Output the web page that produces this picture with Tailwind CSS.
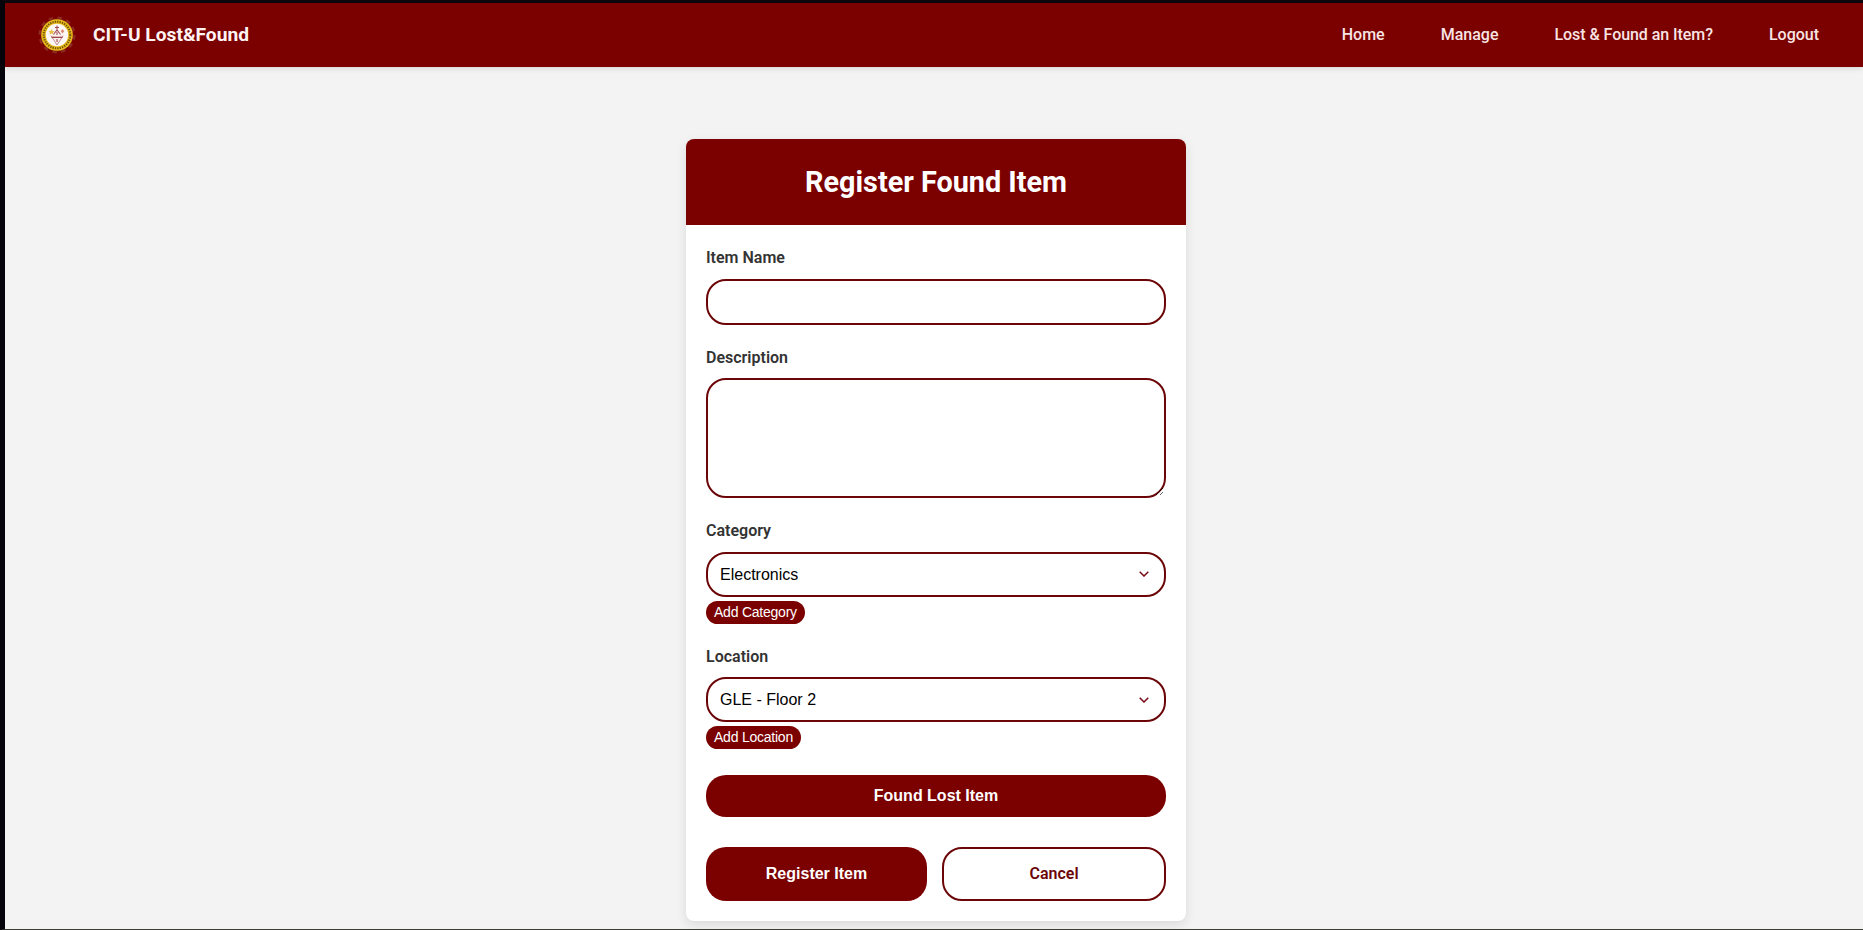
<!DOCTYPE html>
<html lang="en">
<head>
<meta charset="utf-8">
<title>CIT-U Lost&amp;Found</title>
<script src="https://cdn.jsdelivr.net/npm/@tailwindcss/browser@4"></script>
</head>
<body class="h-screen overflow-hidden border-t-[3px] border-b border-l-[5px] border-t-[#0a060b] border-l-[#05040a] border-b-[#3c3c38] bg-[#f3f3f3] font-['Roboto',sans-serif] text-base text-[#333]">
<header class="flex h-16 items-center justify-between bg-[#7b0000] pr-11 pl-[33px] shadow-[0_2px_5px_rgba(0,0,0,0.1)]">
  <div class="flex items-center gap-[17px]">
    <svg class="size-[38px]" viewBox="0 0 38 38">
      <circle cx="19" cy="19" r="17" fill="none" stroke="#8c2c20" stroke-width="3" stroke-dasharray="4.45 4.45"/>
      <circle cx="19" cy="19" r="16.4" fill="#861c12"/>
      <circle cx="19" cy="19" r="15.8" fill="#e6b81c"/>
      <circle cx="19" cy="19" r="13.3" fill="none" stroke="#6b530c" stroke-width="2" stroke-dasharray="1.3 1.1"/>
      <circle cx="19" cy="19" r="11.2" fill="#fdf8f5"/>
      <path d="M12.8 19.5L19 29l6.2-9.5" fill="#fbeeec" stroke="#b9878a" stroke-width=".9"/>
      <path d="M13.5 21.3h11" stroke="#97323b" stroke-width="1.2"/>
      <path d="M19 9.5v4M17 11.5h4M15.5 18.5L19 14l3.5 4.5M19 16v3M19 23v3" fill="none" stroke="#a04c55" stroke-width="1.1"/>
      <path d="M13.5 13l1 2 2 .2-1.5 1.4.4 2-1.9-1-1.9 1 .4-2-1.5-1.4 2-.2z" fill="#e9bd42"/>
      <path d="M24.5 13l1.8 2.2-1.8 2.2-1.8-2.2z" fill="#db8b73"/>
    </svg>
    <span class="text-[19.2px] font-bold text-[#fff3f3]">CIT-U Lost&amp;Found</span>
  </div>
  <nav class="flex gap-14 font-medium text-[#f8e4e4]">
    <a>Home</a><a>Manage</a><a class="tracking-[-0.06px]">Lost &amp; Found an Item?</a><a>Logout</a>
  </nav>
</header>
<main class="ml-[681px] mt-[72px] h-[782px] w-[500px] overflow-hidden rounded-lg bg-white shadow-[0_4px_12px_rgba(0,0,0,0.1)]">
  <h1 class="flex h-[86px] items-center justify-center bg-[#7b0000] pt-0.5 text-[28.8px] font-bold text-white">Register Found Item</h1>
  <form class="px-5 pt-[21px]">
    <label class="block h-[33px] leading-6 font-semibold">Item Name</label>
    <input class="block h-[46px] w-full rounded-[20px] border-2 border-[#6b0508] outline-none">
    <label class="mt-[21px] block h-8 leading-6 font-semibold">Description</label>
    <textarea class="block h-[120px] w-full resize rounded-[20px] border-2 border-[#6b0508] outline-none"></textarea>
    <label class="mt-[21px] block h-[33px] leading-6 font-semibold">Category</label>
    <div class="flex h-[45px] items-center justify-between rounded-[20px] border-2 border-[#6b0508] pr-[15px] pl-3 font-['Liberation_Sans',sans-serif] text-black">
      <span>Electronics</span>
      <svg class="mb-px h-[6px] w-[10px]" viewBox="0 0 10 6" fill="none" stroke="#780b14" stroke-width="1.5"><path d="M.7.7 5 5 9.3.7"/></svg>
    </div>
    <button type="button" class="mt-1 block h-[23px] rounded-full bg-[#7b0000] px-2 pb-0.5 font-['Liberation_Sans',sans-serif] text-sm tracking-[-0.23px] text-white">Add Category</button>
    <label class="mt-[21px] block h-8 leading-6 font-semibold">Location</label>
    <div class="flex h-[45px] items-center justify-between rounded-[20px] border-2 border-[#6b0508] pr-[15px] pl-3 font-['Liberation_Sans',sans-serif] text-black">
      <span>GLE - Floor 2</span>
      <svg class="h-[6px] w-[10px]" viewBox="0 0 10 6" fill="none" stroke="#780b14" stroke-width="1.5"><path d="M.7.7 5 5 9.3.7"/></svg>
    </div>
    <button type="button" class="mt-1 block h-[23px] rounded-full bg-[#7b0000] px-2 pb-0.5 font-['Liberation_Sans',sans-serif] text-sm tracking-[-0.23px] text-white">Add Location</button>
    <button type="button" class="mt-[26px] block h-[42px] w-full rounded-[20px] bg-[#7b0000] font-['Liberation_Sans',sans-serif] font-bold text-white">Found Lost Item</button>
    <div class="mt-[30px] flex h-[54px] gap-[15px]">
      <button type="button" class="w-[221px] rounded-[20px] bg-[#7b0000] font-['Liberation_Sans',sans-serif] font-bold text-white">Register Item</button>
      <button type="button" class="flex-1 rounded-[20px] border-2 border-[#6b0508] font-semibold text-[#6b0508]">Cancel</button>
    </div>
  </form>
</main>
</body>
</html>
